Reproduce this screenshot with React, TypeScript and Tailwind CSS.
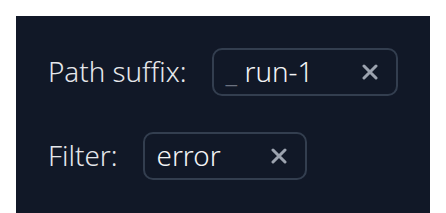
import { type ReactNode } from 'react'

function ClearIcon() {
  return (
    <svg width="16" height="16" viewBox="0 0 16 16" className="shrink-0">
      <path d="M2 2 L14 14 M14 2 L2 14" stroke="#9ca3af" strokeWidth="3" strokeLinecap="round" />
    </svg>
  )
}

function Field({ label, width, children }: { label: string; width: string; children: ReactNode }) {
  return (
    <div className="flex items-center gap-[25px]">
      <span className="shrink-0 whitespace-nowrap text-[27.8px] font-light leading-none text-[#e5e7eb]">{label}</span>
      <div
        className={`flex h-12 shrink-0 items-center justify-between rounded-[10px] border-2 border-[#333e4f] pl-[12px] pr-[18px] ${width}`}
      >
        <span className="whitespace-nowrap text-[27.8px] font-light leading-none text-[#f3f4f6]">{children}</span>
        <ClearIcon />
      </div>
    </div>
  )
}

export default function App() {
  return (
    <div className="h-[213px] overflow-hidden bg-white pl-4 pt-4" style={{ fontFamily: '"Noto Sans", sans-serif' }}>
      <div className="flex w-[414px] flex-col gap-9 bg-[#111827] px-8 pb-9 pt-8">
        <Field label="Path suffix:" width="w-[186px]">
          <span className="text-[#6b7280]">_</span> run-1
        </Field>
        <Field label="Filter:" width="w-[164px]">
          error
        </Field>
      </div>
    </div>
  )
}
